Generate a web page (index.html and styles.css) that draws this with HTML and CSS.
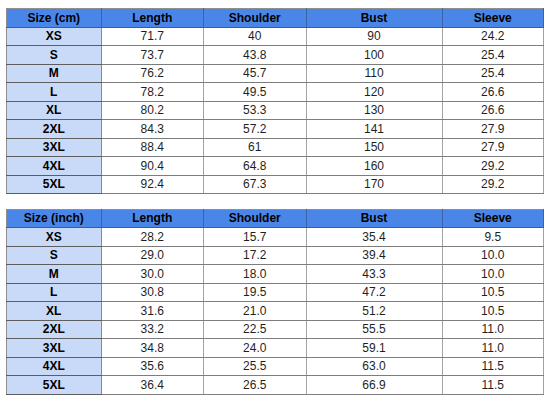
FILE: index.html
```html
<!DOCTYPE html>
<html>
<head>
<meta charset="utf-8">
<link rel="stylesheet" href="styles.css">
</head>
<body>
<div class="page">
<table class="chart">
<colgroup><col class="c1"><col class="c2"><col class="c3"><col class="c4"><col class="c5"></colgroup>
<thead><tr><th>Size (cm)</th><th>Length</th><th>Shoulder</th><th>Bust</th><th>Sleeve</th></tr></thead>
<tbody>
<tr><th>XS</th><td>71.7</td><td>40</td><td>90</td><td>24.2</td></tr>
<tr><th>S</th><td>73.7</td><td>43.8</td><td>100</td><td>25.4</td></tr>
<tr><th>M</th><td>76.2</td><td>45.7</td><td>110</td><td>25.4</td></tr>
<tr><th>L</th><td>78.2</td><td>49.5</td><td>120</td><td>26.6</td></tr>
<tr><th>XL</th><td>80.2</td><td>53.3</td><td>130</td><td>26.6</td></tr>
<tr><th>2XL</th><td>84.3</td><td>57.2</td><td>141</td><td>27.9</td></tr>
<tr><th>3XL</th><td>88.4</td><td>61</td><td>150</td><td>27.9</td></tr>
<tr><th>4XL</th><td>90.4</td><td>64.8</td><td>160</td><td>29.2</td></tr>
<tr><th>5XL</th><td>92.4</td><td>67.3</td><td>170</td><td>29.2</td></tr>
</tbody>
</table>
<table class="chart">
<colgroup><col class="c1"><col class="c2"><col class="c3"><col class="c4"><col class="c5"></colgroup>
<thead><tr><th>Size (inch)</th><th>Length</th><th>Shoulder</th><th>Bust</th><th>Sleeve</th></tr></thead>
<tbody>
<tr><th>XS</th><td>28.2</td><td>15.7</td><td>35.4</td><td>9.5</td></tr>
<tr><th>S</th><td>29.0</td><td>17.2</td><td>39.4</td><td>10.0</td></tr>
<tr><th>M</th><td>30.0</td><td>18.0</td><td>43.3</td><td>10.0</td></tr>
<tr><th>L</th><td>30.8</td><td>19.5</td><td>47.2</td><td>10.5</td></tr>
<tr><th>XL</th><td>31.6</td><td>21.0</td><td>51.2</td><td>10.5</td></tr>
<tr><th>2XL</th><td>33.2</td><td>22.5</td><td>55.5</td><td>11.0</td></tr>
<tr><th>3XL</th><td>34.8</td><td>24.0</td><td>59.1</td><td>11.0</td></tr>
<tr><th>4XL</th><td>35.6</td><td>25.5</td><td>63.0</td><td>11.5</td></tr>
<tr><th>5XL</th><td>36.4</td><td>26.5</td><td>66.9</td><td>11.5</td></tr>
</tbody>
</table>
</div>
</body>
</html>
```
FILE: styles.css
```css
html, body {
  margin: 0;
  padding: 0;
  background: #ffffff;
}
.page {
  padding: 8px 0 0 6px;
  display: flex;
  flex-direction: column;
  gap: 14.5px;
  font-family: "Liberation Sans", Arial, sans-serif;
}
.chart {
  width: 537px;
  table-layout: fixed;
  border-collapse: collapse;
  border: 1px solid #8f8f8f;
  font-size: 12px;
  color: #1f1f1f;
}
.c1 { width: 94.5px; }
.c2 { width: 102.5px; }
.c3 { width: 102.5px; }
.c4 { width: 136px; }
.c5 { width: 101.5px; }
.chart tr {
  height: 18.5px;
}
.chart th, .chart td {
  padding: 0;
  text-align: center;
  vertical-align: middle;
  line-height: 14px;
  border-right: 1px solid #a3a3a3;
  border-bottom: 1px solid #7d7d7d;
}
.chart thead th {
  background: #4a86e8;
  color: #000000;
  font-weight: bold;
  border-right-color: #3a63a8;
  border-bottom-color: #5a5a5a;
}
.chart tbody th {
  background: #c9daf8;
  color: #000000;
  font-weight: bold;
  border-bottom-color: #5e5e5e;
  border-right-color: #8a8a8a;
}
.chart td {
  font-weight: normal;
}
```
